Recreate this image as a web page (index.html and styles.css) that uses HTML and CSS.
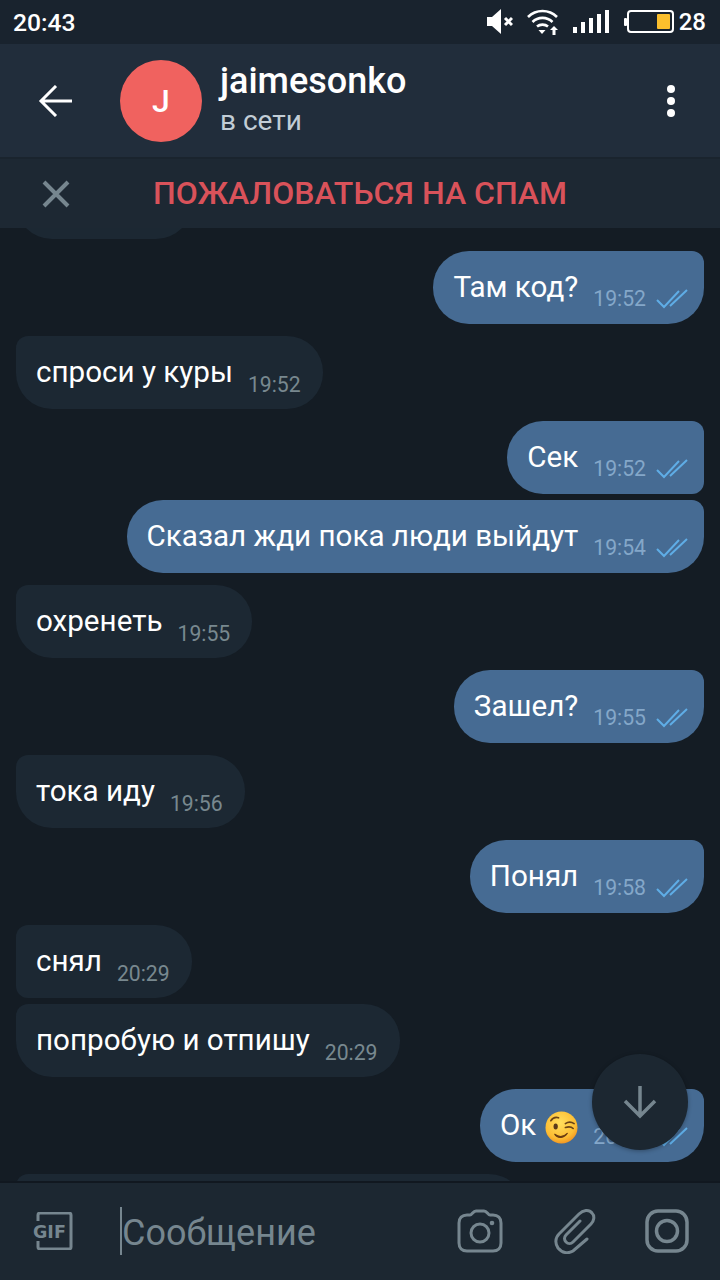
FILE: index.html
```html
<!DOCTYPE html>
<html lang="ru">

<head>
    <meta charset="UTF-8">
    <title>jaimesonko</title>
    <link rel="stylesheet" href="styles.css">
</head>

<body>
    <div class="status-bar">
        <span class="clock">20:43</span>
        <div class="status-icons">
            <svg class="ic-mute" width="26" height="26" viewBox="0 0 26 26">
                <path d="M0 8h5l9-8v25l-9-8H0z" fill="#fff"/>
                <path d="M18 9l7 7M25 9l-7 7" stroke="#fff" stroke-width="3" fill="none"/>
            </svg>
            <svg class="ic-wifi" width="32" height="26" viewBox="0 0 32 26">
                <g fill="none" stroke="#fff" stroke-width="2.6">
                    <path d="M1 8C9 0 22 0 30 8"/>
                    <path d="M5.500 13C11 7.500 20 7.500 25.500 13"/>
                    <path d="M10 17.500C13 15 18 15 21 17.500"/>
                </g>
                <path d="M11.500 21h7l-3.500 4z" fill="#fff"/>
                <path d="M27 17l4 4h-2.500v5h-3v-5H23z" fill="#fff"/>
            </svg>
            <svg class="ic-signal" width="36" height="24" viewBox="0 0 36 24">
                <rect x="0" y="17" width="4" height="6" fill="#fff"/>
                <rect x="8" y="12" width="4" height="11" fill="#fff"/>
                <rect x="16" y="8" width="4" height="15" fill="#fff"/>
                <rect x="24" y="4" width="4" height="19" fill="#fff"/>
                <rect x="32" y="0" width="4" height="23" fill="#fff"/>
            </svg>
            <svg class="ic-battery" width="50" height="24" viewBox="0 0 50 24">
                <rect x="0" y="8" width="3" height="8" rx="1" fill="#fff"/>
                <rect x="4" y="1" width="45" height="21" rx="3" fill="none" stroke="#fff" stroke-width="2"/>
                <rect x="33" y="4" width="13" height="15" rx="1" fill="#fbbf2d"/>
            </svg>
            <span class="percent">28</span>
        </div>
    </div>

    <div class="top-bar">
        <svg class="back" width="34" height="32" viewBox="0 0 34 32">
            <path d="M34 16H3M18 1L3 16l15 15" fill="none" stroke="#fff" stroke-width="3"/>
        </svg>
        <div class="avatar">J</div>
        <div class="user">
            <div class="user-name">jaimesonko</div>
            <div class="user-state">в сети</div>
        </div>
        <div class="more"><i></i><i></i><i></i></div>
    </div>

    <div class="spam-bar">
        <svg class="spam-close" width="28" height="28" viewBox="0 0 28 28">
            <path d="M2 2l24 24M26 2L2 26" fill="none" stroke="#76868f" stroke-width="4"/>
        </svg>
        <span class="spam-text">ПОЖАЛОВАТЬСЯ НА СПАМ</span>
    </div>

    <div class="chat">
        <div class="msg in msg-cut-top"></div>

        <div class="msg out">
            <span class="text">Там код?</span><span class="time">19:52</span>
            <svg class="check" width="32" height="20" viewBox="0 0 32 20"><path d="M1 11l7 7L23 2M14 17L31 1" fill="none" stroke="#5fade6" stroke-width="2"/></svg>
        </div>
        <div class="msg in">
            <span class="text">спроси у куры</span><span class="time">19:52</span>
        </div>
        <div class="msg out first">
            <span class="text">Сек</span><span class="time">19:52</span>
            <svg class="check" width="32" height="20" viewBox="0 0 32 20"><path d="M1 11l7 7L23 2M14 17L31 1" fill="none" stroke="#5fade6" stroke-width="2"/></svg>
        </div>
        <div class="msg out next">
            <span class="text">Сказал жди пока люди выйдут</span><span class="time">19:54</span>
            <svg class="check" width="32" height="20" viewBox="0 0 32 20"><path d="M1 11l7 7L23 2M14 17L31 1" fill="none" stroke="#5fade6" stroke-width="2"/></svg>
        </div>
        <div class="msg in">
            <span class="text">охренеть</span><span class="time">19:55</span>
        </div>
        <div class="msg out">
            <span class="text">Зашел?</span><span class="time">19:55</span>
            <svg class="check" width="32" height="20" viewBox="0 0 32 20"><path d="M1 11l7 7L23 2M14 17L31 1" fill="none" stroke="#5fade6" stroke-width="2"/></svg>
        </div>
        <div class="msg in">
            <span class="text">тока иду</span><span class="time">19:56</span>
        </div>
        <div class="msg out">
            <span class="text">Понял</span><span class="time">19:58</span>
            <svg class="check" width="32" height="20" viewBox="0 0 32 20"><path d="M1 11l7 7L23 2M14 17L31 1" fill="none" stroke="#5fade6" stroke-width="2"/></svg>
        </div>
        <div class="msg in first">
            <span class="text">снял</span><span class="time">20:29</span>
        </div>
        <div class="msg in next">
            <span class="text">попробую и отпишу</span><span class="time">20:29</span>
        </div>
        <div class="msg out">
            <span class="text">Ок</span>
            <svg class="emoji" width="33" height="33" viewBox="0 0 34 34">
                <defs>
                    <radialGradient id="face" cx="45%" cy="35%" r="70%">
                        <stop offset="0" stop-color="#ffdf5e"/>
                        <stop offset="0.7" stop-color="#fdbd33"/>
                        <stop offset="1" stop-color="#f08c1e"/>
                    </radialGradient>
                </defs>
                <circle cx="17" cy="17" r="16.500" fill="url(#face)"/>
                <ellipse cx="11" cy="16" rx="2.200" ry="3" fill="#5a3a1a"/>
                <path d="M6 10c2-3 5-4 8-3M21 13c3-2 6-2 9 0M21 17c3-1 6-1 8 1" fill="none" stroke="#6b4316" stroke-width="1.700" stroke-linecap="round"/>
                <path d="M10 24c4 3 9 3 13-1-3 5-10 6-13 1z" fill="#6b3d12" stroke="#6b3d12" stroke-width="1.200" stroke-linejoin="round"/>
            </svg>
            <span class="time">20:30</span>
            <svg class="check" width="32" height="20" viewBox="0 0 32 20"><path d="M1 11l7 7L23 2M14 17L31 1" fill="none" stroke="#5fade6" stroke-width="2"/></svg>
        </div>
        <div class="msg in msg-cut-bottom"></div>

        <div class="to-bottom">
            <svg width="34" height="34" viewBox="0 0 34 34">
                <path d="M17 1v29M2 16l15 15 15-15" fill="none" stroke="#76868f" stroke-width="3.500"/>
            </svg>
        </div>
    </div>

    <div class="input-bar">
        <svg class="ic-gif" width="40" height="38" viewBox="0 0 40 38">
            <path d="M5 9V3a2 2 0 0 1 2-2h29a2 2 0 0 1 2 2v32a2 2 0 0 1-2 2H7a2 2 0 0 1-2-2v-6" fill="none" stroke="#76868f" stroke-width="3"/>
            <text x="0" y="25.500" class="gif-label">GIF</text>
        </svg>
        <div class="field">
            <i class="caret"></i>
            <span class="placeholder">Сообщение</span>
        </div>
        <svg class="ic-camera" width="46" height="44" viewBox="0 0 46 44" fill="none" stroke="#76868f" stroke-width="3">
            <path d="M10 6h3c2 0 3-4 6-4h8c3 0 4 4 6 4h3c5 0 8 3 8 8v20c0 5-3 8-8 8H10c-5 0-8-3-8-8V14c0-5 3-8 8-8z"/>
            <circle cx="23" cy="24" r="9"/>
            <circle cx="35" cy="14" r="2.300" fill="#76868f" stroke="none"/>
        </svg>
        <svg class="ic-clip" width="42" height="46" viewBox="0 0 42 46" fill="none" stroke="#76868f" stroke-width="3" stroke-linecap="round">
            <path d="M33 31L19 43c-5 3-11 2-15-3-3-4-3-10 1-14L25 6c4-4 10-5 13-1 3 3 2 8-1 11L19 34c-2 2-5 2-7 0-2-2-2-5 0-7l14-14"/>
        </svg>
        <svg class="ic-square" width="44" height="44" viewBox="0 0 44 44" fill="none" stroke="#76868f" stroke-width="3.500">
            <rect x="2" y="2" width="40" height="40" rx="11"/>
            <circle cx="22" cy="22" r="10.500"/>
        </svg>
    </div>
</body>

</html>
```

FILE: styles.css
```css
* {
    margin: 0;
    padding: 0;
    box-sizing: border-box;
}

body {
    width: 720px;
    height: 1280px;
    display: flex;
    flex-direction: column;
    overflow: hidden;
    background: #141c24;
    color: #fff;
    font-family: Roboto, "Noto Sans", sans-serif;
}

/* status bar */
.status-bar {
    height: 44px;
    flex: none;
    display: flex;
    align-items: center;
    justify-content: space-between;
    padding: 0 14px 0 13px;
    background: #19232e;
}

.clock {
    font-size: 24.700px;
    font-weight: 500;
}

.status-icons {
    display: flex;
    align-items: center;
}

.ic-signal {
    margin-left: 14px;
}

.ic-wifi {
    margin-left: 14px;
}

.ic-battery {
    margin-left: 15px;
}

.percent {
    margin-left: 5px;
    font-size: 24px;
    font-weight: 500;
}

/* header */
.top-bar {
    height: 113px;
    flex: none;
    display: flex;
    align-items: center;
    padding-left: 38px;
    background: #212d3b;
}

.back {
    flex: none;
}

.avatar {
    width: 82px;
    height: 82px;
    margin-left: 48px;
    flex: none;
    display: flex;
    align-items: center;
    justify-content: center;
    border-radius: 50%;
    background: #f0625f;
    font-size: 32px;
    font-weight: 500;
}

.user {
    margin-left: 18px;
    flex: 1;
}

.user-name {
    font-size: 36px;
    font-weight: 500;
    line-height: 40px;
}

.user-state {
    font-size: 28px;
    line-height: 40px;
    color: #c2cdd6;
}

.more {
    width: 8px;
    margin-right: 45px;
    display: flex;
    flex-direction: column;
    gap: 4px;
}

.more i {
    height: 8px;
    border-radius: 50%;
    background: #fff;
}

/* spam bar */
.spam-bar {
    height: 71px;
    flex: none;
    position: relative;
    z-index: 2;
    display: flex;
    align-items: center;
    padding-left: 42px;
    background: #1d2833;
    border-top: 2px solid #1a242e;
}

.spam-text {
    margin-left: 83px;
    margin-bottom: 2px;
    font-size: 32px;
    font-weight: 500;
    color: #d9525a;
}

/* messages */
.chat {
    flex: 1;
    position: relative;
    display: flex;
    flex-direction: column;
    overflow: hidden;
}

.msg {
    height: 73px;
    flex: none;
    margin-top: 12px;
    display: flex;
    align-items: center;
    padding: 0 16px 0 20px;
    border-radius: 36px;
}

.msg.in {
    align-self: flex-start;
    margin-left: 16px;
    padding-right: 22px;
    background: #1c2833;
    border-top-left-radius: 12px;
}

.msg.out {
    align-self: flex-end;
    margin-right: 16px;
    background: #466b93;
    border-top-right-radius: 12px;
}

.msg.next {
    margin-top: 6px;
}

.msg.in.first {
    border-bottom-left-radius: 12px;
}

.msg.out.first {
    border-bottom-right-radius: 12px;
}

.msg-cut-top {
    width: 176px;
    margin-top: -62px;
}

.msg-cut-bottom {
    width: 509px;
}

.text {
    font-size: 29.600px;
    line-height: 36px;
    margin-bottom: 2px;
}

.time {
    margin: 24px 0 0 15px;
    font-size: 21.200px;
    line-height: 26px;
    color: #78888f;
}

.msg.out .time {
    margin-top: 22px;
    color: #84a7c9;
}

.check {
    margin: 22px 0 0 10px;
}

.emoji {
    margin: 3px 0 0 9px;
}

.to-bottom {
    position: absolute;
    left: 592px;
    top: 826px;
    width: 96px;
    height: 96px;
    display: flex;
    align-items: center;
    justify-content: center;
    border-radius: 50%;
    background: #1c2731;
    box-shadow: 0 1px 4px rgba(0, 0, 0, .3);
}

/* input */
.input-bar {
    height: 99px;
    flex: none;
    display: flex;
    align-items: center;
    padding: 0 31px 2px 33px;
    background: #1c2731;
    border-top: 2px solid #111820;
}

.gif-label {
    font-family: "DejaVu Sans", sans-serif;
    font-size: 17.500px;
    font-weight: 700;
    fill: #76868f;
}

.field {
    flex: 1;
    display: flex;
    align-items: center;
    margin-left: 47px;
}

.caret {
    width: 2px;
    height: 48px;
    background: #76868f;
}

.placeholder {
    margin-top: 4px;
    font-size: 36px;
    color: #76868f;
}

.ic-camera {
    margin-right: 1px;
}

.ic-clip {
    margin-left: 50px;
}

.ic-square {
    margin-left: 49px;
}
```
